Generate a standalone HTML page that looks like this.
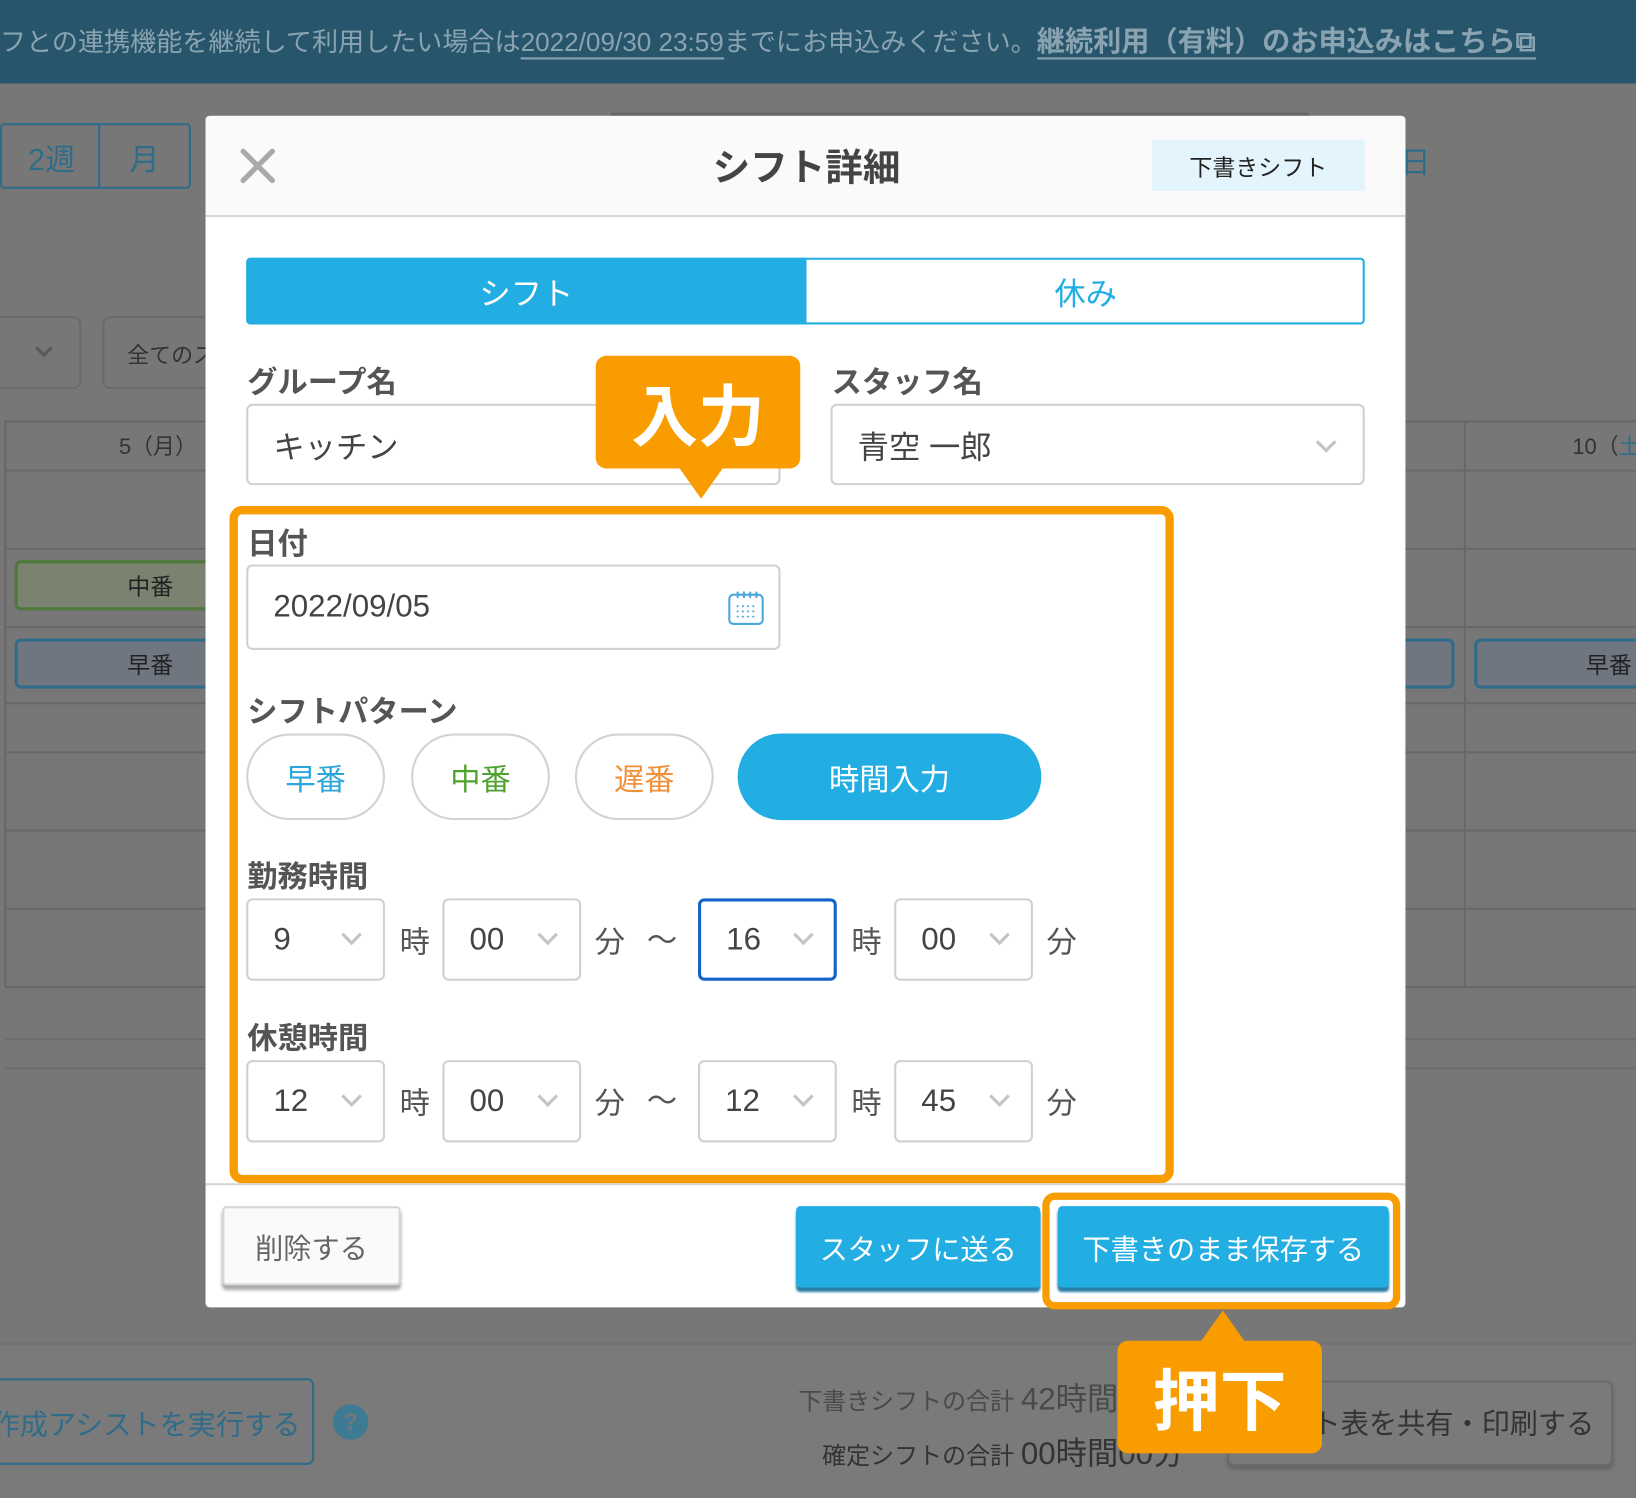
<!DOCTYPE html>
<html><head><meta charset="utf-8">
<style>
*{box-sizing:border-box;margin:0;padding:0}
html,body{width:1636px;height:1498px;overflow:hidden;background:#777}
body{font-family:"Liberation Sans","Noto Sans CJK JP",sans-serif;color:#444}
#w{position:absolute;left:0;top:0;width:1568px;height:1436px;transform:scale(1.04337);transform-origin:0 0;background:#777;overflow:hidden}
.a{position:absolute}
.sel{position:absolute;background:#fff;border:2px solid #d0d0d0;border-radius:6px;font-size:30px;color:#444;display:flex;align-items:center;padding-left:24px}
.chev{position:absolute;width:14px;height:14px;border-right:3px solid #c4c4c4;border-bottom:3px solid #c4c4c4;transform:rotate(45deg)}
.lbl{position:absolute;font-size:29px;font-weight:bold;color:#555}
.unit{position:absolute;font-size:29px;color:#555}
.pill{position:absolute;top:703px;height:83px;border:2px solid #d2d2d2;border-radius:42px;background:#fff;font-size:29px;display:flex;align-items:center;justify-content:center}
</style></head><body><div id="w">
<div class="a" style="left:0;top:0;width:1568px;height:80px;background:#27566c"></div>
<div class="a" style="left:0;top:18px;font-size:25px;color:#8aa3b0;white-space:nowrap">フとの連携機能を継続して利用したい場合は<span style="border-bottom:2px solid #8aa3b0">2022/09/30 23:59</span>までにお申込みください。<b style="border-bottom:2px solid #8aa3b0;font-size:27px">継続利用（有料）のお申込みはこちら⧉</b></div>
<div class="a" style="left:0;top:118px;width:183px;height:63px;border:2px solid #2f6c8a;border-radius:4px"></div>
<div class="a" style="left:94px;top:118px;width:2px;height:63px;background:#2f6c8a"></div>
<div class="a" style="left:27px;top:130px;font-size:29px;color:#2f6c8a">2週</div>
<div class="a" style="left:124px;top:130px;font-size:29px;color:#2f6c8a">月</div>
<div class="a" style="left:585px;top:108px;width:670px;height:4px;border-radius:4px;background:#666"></div>
<div class="a" style="left:1342px;top:133px;font-size:29px;color:#2f6c8a">日</div>
<div class="a" style="left:-10px;top:303px;width:88px;height:70px;border:2px solid #6a6a6a;border-radius:8px"></div>
<div class="a" style="left:98px;top:303px;width:140px;height:70px;border:2px solid #6a6a6a;border-radius:8px"></div>
<div class="a" style="left:122px;top:325px;font-size:21px;color:#333">全てのス</div>
<div class="a" style="left:36px;top:328px;width:12px;height:12px;border-right:3px solid #5a5a5a;border-bottom:3px solid #5a5a5a;transform:rotate(45deg)"></div>
<div class="a" style="left:5px;top:403px;width:1563px;height:2px;background:#686868"></div>
<div class="a" style="left:5px;top:450px;width:1563px;height:2px;background:#686868"></div>
<div class="a" style="left:5px;top:525px;width:1563px;height:2px;background:#686868"></div>
<div class="a" style="left:5px;top:600px;width:1563px;height:2px;background:#686868"></div>
<div class="a" style="left:5px;top:673px;width:1563px;height:2px;background:#686868"></div>
<div class="a" style="left:5px;top:720px;width:1563px;height:2px;background:#686868"></div>
<div class="a" style="left:5px;top:795px;width:1563px;height:2px;background:#686868"></div>
<div class="a" style="left:5px;top:870px;width:1563px;height:2px;background:#686868"></div>
<div class="a" style="left:5px;top:945px;width:1563px;height:2px;background:#686868"></div>
<div class="a" style="left:5px;top:995px;width:1563px;height:2px;background:#6c6c6c"></div>
<div class="a" style="left:5px;top:1023px;width:1563px;height:2px;background:#6c6c6c"></div>
<div class="a" style="left:4px;top:403px;width:2px;height:542px;background:#686868"></div>
<div class="a" style="left:1403px;top:403px;width:2px;height:542px;background:#686868"></div>
<div class="a" style="left:114px;top:412px;font-size:21px;color:#333">5（月）</div>
<div class="a" style="left:1507px;top:412px;font-size:21px;color:#333;white-space:nowrap">10（<span style="color:#2f6c8a">土</span></div>
<div class="a" style="left:14px;top:537px;width:200px;height:48px;border:3px solid #4d7a3a;border-radius:6px;background:#7b8270"></div>
<div class="a" style="left:122px;top:545px;font-size:22px;color:#222">中番</div>
<div class="a" style="left:14px;top:612px;width:200px;height:48px;border:3px solid #2f6c8a;border-radius:6px;background:#6f7680"></div>
<div class="a" style="left:122px;top:620px;font-size:22px;color:#222">早番</div>
<div class="a" style="left:1330px;top:612px;width:64px;height:48px;border:3px solid #2f6c8a;border-radius:6px;background:#6f7680"></div>
<div class="a" style="left:1413px;top:612px;width:180px;height:48px;border:3px solid #2f6c8a;border-radius:6px;background:#6f7680"></div>
<div class="a" style="left:1520px;top:620px;font-size:22px;color:#222">早番</div>
<div class="a" style="left:0;top:1287px;width:1568px;height:149px;background:#7a7a7a;border-top:2px solid #717171"></div>
<div class="a" style="left:-20px;top:1321px;width:321px;height:83px;border:2px solid #2f6c8a;border-radius:6px"></div>
<div class="a" style="left:-8px;top:1344px;font-size:27px;color:#2f6c8a;white-space:nowrap">作成アシストを実行する</div>
<div class="a" style="left:319px;top:1346px;width:34px;height:34px;border-radius:50%;background:#3f7a94;color:#777;font-weight:bold;font-size:22px;text-align:center;line-height:34px">?</div>
<div class="a" style="left:765px;top:1316px;font-size:23px;color:#4a4a4a;white-space:nowrap">下書きシフトの合計 <span style="font-size:30px">42時間</span></div>
<div class="a" style="left:788px;top:1368px;font-size:23px;color:#333;white-space:nowrap">確定シフトの合計 <span style="font-size:30px">00時間00分</span></div>
<div class="a" style="left:1176px;top:1323px;width:370px;height:82px;border:2px solid #6a6a6a;border-radius:6px;background:#7a7a7a;box-shadow:0 3px 3px #666"></div>
<div class="a" style="left:1258px;top:1343px;font-size:27px;color:#333;white-space:nowrap">ト表を共有・印刷する</div>

<div class="a" style="left:197px;top:111px;width:1150px;height:1142px;background:#fff;border-radius:4px"></div>
<div class="a" style="left:197px;top:111px;width:1150px;height:97px;background:#fafafa;border-bottom:2px solid #d6d6d6;border-radius:4px 4px 0 0"></div>
<svg class="a" style="left:229px;top:141px" width="36" height="36" viewBox="0 0 36 36"><path d="M4 4L32 32M32 4L4 32" stroke="#a9a9a9" stroke-width="5" stroke-linecap="round"/></svg>
<div class="a" style="left:673px;top:132px;width:200px;text-align:center;font-size:36px;font-weight:bold;color:#444">シフト詳細</div>
<div class="a" style="left:1104px;top:134px;width:204px;height:49px;background:#e4f4fc;font-size:22px;color:#222;display:flex;align-items:center;justify-content:center">下書きシフト</div>
<div class="a" style="left:236px;top:247px;width:1072px;height:64px;border:2px solid #22aee3;border-radius:4px;background:#fff"></div>
<div class="a" style="left:236px;top:247px;width:537px;height:64px;background:#22aee3;border-radius:4px 0 0 4px;color:#fff;font-size:30px;display:flex;align-items:center;justify-content:center">シフト</div>
<div class="a" style="left:773px;top:247px;width:535px;height:64px;color:#22aee3;font-size:30px;display:flex;align-items:center;justify-content:center">休み</div>
<div class="lbl" style="left:237px;top:343px">グループ名</div>
<div class="lbl" style="left:797px;top:343px">スタッフ名</div>
<div class="sel" style="left:236px;top:387px;width:512px;height:78px">キッチン</div>
<div class="sel" style="left:796px;top:387px;width:512px;height:78px">青空 一郎<span class="chev" style="left:466px;top:28px"></span></div>
<div class="lbl" style="left:237px;top:498px">日付</div>
<div class="sel" style="left:236px;top:541px;width:512px;height:82px">2022/09/05</div>
<svg class="a" style="left:697px;top:565px" width="36" height="36" viewBox="0 0 36 36"><rect x="2" y="5" width="32" height="28" rx="4" fill="none" stroke="#4aa8dc" stroke-width="2"/><path d="M10 2v6M16 2v6M22 2v6M28 2v6" stroke="#4aa8dc" stroke-width="2"/><g fill="#4aa8dc"><circle cx="10" cy="16" r="1"/><circle cx="15" cy="16" r="1"/><circle cx="20" cy="16" r="1"/><circle cx="25" cy="16" r="1"/><circle cx="10" cy="21" r="1"/><circle cx="15" cy="21" r="1"/><circle cx="20" cy="21" r="1"/><circle cx="25" cy="21" r="1"/><circle cx="10" cy="26" r="1"/><circle cx="15" cy="26" r="1"/><circle cx="20" cy="26" r="1"/><circle cx="25" cy="26" r="1"/></g></svg>
<div class="lbl" style="left:237px;top:659px">シフトパターン</div>
<div class="pill" style="left:236px;width:133px;color:#2ba6db">早番</div>
<div class="pill" style="left:394px;width:133px;color:#4ea22e">中番</div>
<div class="pill" style="left:551px;width:133px;color:#f0913a">遅番</div>
<div class="pill" style="left:707px;width:291px;background:#22aee3;border-color:#22aee3;color:#fff">時間入力</div>
<div class="lbl" style="left:237px;top:817px">勤務時間</div>
<div class="sel" style="left:236px;top:861px;width:133px;height:79px">9<span class="chev" style="left:92px;top:26px"></span></div>
<div class="unit" style="left:383px;top:880px">時</div>
<div class="sel" style="left:424px;top:861px;width:133px;height:79px">00<span class="chev" style="left:92px;top:26px"></span></div>
<div class="unit" style="left:570px;top:880px">分</div>
<div class="unit" style="left:620px;top:878px">〜</div>
<div class="sel" style="left:669px;top:861px;width:133px;height:79px;border:3px solid #1562c8">16<span class="chev" style="left:91px;top:25px"></span></div>
<div class="unit" style="left:816px;top:880px">時</div>
<div class="sel" style="left:857px;top:861px;width:133px;height:79px">00<span class="chev" style="left:92px;top:26px"></span></div>
<div class="unit" style="left:1003px;top:880px">分</div>
<div class="lbl" style="left:237px;top:972px">休憩時間</div>
<div class="sel" style="left:236px;top:1016px;width:133px;height:79px">12<span class="chev" style="left:92px;top:26px"></span></div>
<div class="unit" style="left:383px;top:1034px">時</div>
<div class="sel" style="left:424px;top:1016px;width:133px;height:79px">00<span class="chev" style="left:92px;top:26px"></span></div>
<div class="unit" style="left:570px;top:1034px">分</div>
<div class="unit" style="left:620px;top:1032px">〜</div>
<div class="sel" style="left:669px;top:1016px;width:133px;height:79px">12<span class="chev" style="left:92px;top:26px"></span></div>
<div class="unit" style="left:816px;top:1034px">時</div>
<div class="sel" style="left:857px;top:1016px;width:133px;height:79px">45<span class="chev" style="left:92px;top:26px"></span></div>
<div class="unit" style="left:1003px;top:1034px">分</div>
<div class="a" style="left:197px;top:1134px;width:1150px;height:2px;background:#d6d6d6"></div>
<div class="a" style="left:213px;top:1156px;width:171px;height:76px;background:#fafafa;border:2px solid #d6d6d6;border-radius:4px;box-shadow:0 4px 3px #aaa;font-size:27px;color:#666;display:flex;align-items:center;justify-content:center">削除する</div>
<div class="a" style="left:763px;top:1156px;width:234px;height:78px;background:#22aee3;border-radius:4px;box-shadow:0 4px 2px #2a7fa8;font-size:27px;color:#fff;display:flex;align-items:center;justify-content:center">スタッフに送る</div>
<div class="a" style="left:1014px;top:1156px;width:317px;height:78px;background:#22aee3;border-radius:4px;box-shadow:0 4px 2px #2a7fa8;font-size:27px;color:#fff;display:flex;align-items:center;justify-content:center">下書きのまま保存する</div>
<div class="a" style="left:220px;top:485px;width:905px;height:649px;border:8px solid #f99c00;border-radius:12px"></div>
<div class="a" style="left:999px;top:1143px;width:343px;height:112px;border:7px solid #f99c00;border-radius:12px"></div>
<div class="a" style="left:571px;top:341px;width:196px;height:108px;background:#f99c00;border-radius:10px;color:#fff;font-weight:bold;font-size:64px;display:flex;align-items:center;justify-content:center">入力</div>
<svg class="a" style="left:650px;top:447px" width="44" height="32"><path d="M0 0H44L22 31Z" fill="#f99c00"/></svg>
<div class="a" style="left:1071px;top:1285px;width:196px;height:108px;background:#f99c00;border-radius:10px;color:#fff;font-weight:bold;font-size:64px;display:flex;align-items:center;justify-content:center">押下</div>
<svg class="a" style="left:1150px;top:1256px" width="44" height="31"><path d="M0 31H44L22 0Z" fill="#f99c00"/></svg>
</div></body></html>
